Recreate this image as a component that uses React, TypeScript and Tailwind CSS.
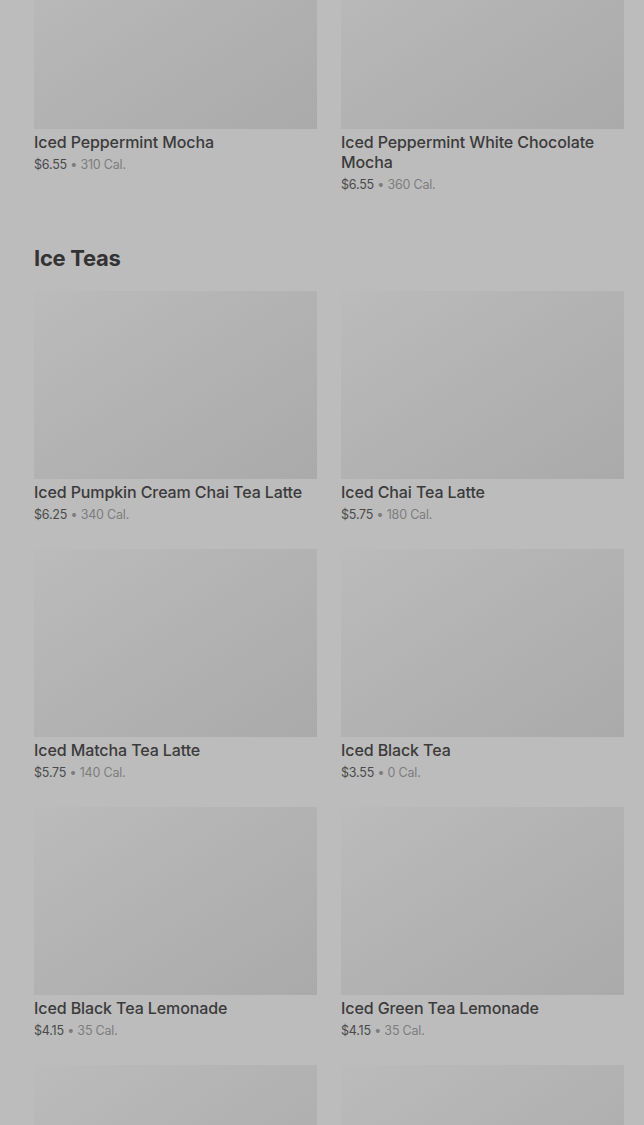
type Item = { name: string; price: string; cal: string };

const topItems: Item[] = [
  { name: 'Iced Peppermint Mocha', price: '$6.55', cal: '310 Cal.' },
  { name: 'Iced Peppermint White Chocolate Mocha', price: '$6.55', cal: '360 Cal.' },
];

const iceTeas: Item[] = [
  { name: 'Iced Pumpkin Cream Chai Tea Latte', price: '$6.25', cal: '340 Cal.' },
  { name: 'Iced Chai Tea Latte', price: '$5.75', cal: '180 Cal.' },
  { name: 'Iced Matcha Tea Latte', price: '$5.75', cal: '140 Cal.' },
  { name: 'Iced Black Tea', price: '$3.55', cal: '0 Cal.' },
  { name: 'Iced Black Tea Lemonade', price: '$4.15', cal: '35 Cal.' },
  { name: 'Iced Green Tea Lemonade', price: '$4.15', cal: '35 Cal.' },
];

function Placeholder() {
  return <div className="h-[188px] w-full bg-gradient-to-br from-[#bbbbbb] via-[#b2b2b2] to-[#aaaaaa]" />;
}

function Card({ item }: { item: Item }) {
  return (
    <div className="flex flex-col">
      <Placeholder />
      <div className="pt-[3px]">
        <p className="text-[16px] leading-[20px] font-medium text-[#3b3b3b] tracking-[-0.1px]">{item.name}</p>
        <p className="mt-[3px] text-[12.5px] leading-[20px] text-[#4a4a4a] tracking-[-0.2px]">
          {item.price}
          <span className="text-[#7c7c7c]"> • {item.cal}</span>
        </p>
      </div>
    </div>
  );
}

export default function App() {
  return (
    <div
      className="h-[1125px] w-[644px] overflow-hidden bg-[#bcbcbc]"
      style={{ fontFamily: 'Inter, "Noto Sans", sans-serif' }}
    >
      <div className="-mt-[59px] pl-[34px] pr-[20px]">
        <div className="grid grid-cols-2 gap-x-[24px]">
          {topItems.map((item) => (
            <Card key={item.name} item={item} />
          ))}
        </div>

        <h2 className="mt-[49px] text-[22px] leading-[28px] font-bold text-[#333333] tracking-[-0.3px]">Ice Teas</h2>

        <div className="mt-[19px] grid grid-cols-2 gap-x-[24px] gap-y-[24px]">
          {iceTeas.map((item) => (
            <Card key={item.name} item={item} />
          ))}
          {/* next row, only the tops of the images are in view */}
          <Placeholder />
          <Placeholder />
        </div>
      </div>
    </div>
  );
}
